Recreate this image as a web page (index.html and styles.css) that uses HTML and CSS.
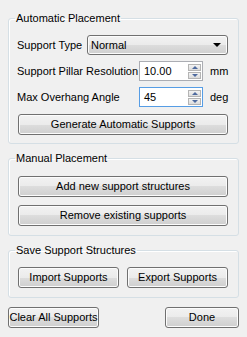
FILE: index.html
```html
<!DOCTYPE html>
<html>
<head>
<meta charset="utf-8">
<link rel="stylesheet" href="styles.css">
</head>
<body>
<div class="dialog">
  <fieldset class="group g1">
    <legend>Automatic Placement</legend>
    <div class="row">
      <span class="label type-label">Support Type</span>
      <div class="combo"><span class="combo-text">Normal</span><span class="combo-arrow"></span></div>
    </div>
    <div class="row">
      <span class="label spin-label">Support Pillar Resolution</span>
      <div class="spin"><span class="spin-text">10.00</span><span class="spin-btns"><span class="sb up"></span><span class="sb down"></span></span></div>
      <span class="unit">mm</span>
    </div>
    <div class="row">
      <span class="label spin-label">Max Overhang Angle</span>
      <div class="spin focus"><span class="spin-text">45</span><span class="spin-btns"><span class="sb up"></span><span class="sb down"></span></span></div>
      <span class="unit">deg</span>
    </div>
    <button class="btn wide gen">Generate Automatic Supports</button>
  </fieldset>
  <fieldset class="group g2">
    <legend>Manual Placement</legend>
    <button class="btn wide">Add new support structures</button>
    <button class="btn wide">Remove existing supports</button>
  </fieldset>
  <fieldset class="group g3">
    <legend>Save Support Structures</legend>
    <div class="pair">
      <button class="btn half">Import Supports</button>
      <button class="btn half">Export Supports</button>
    </div>
  </fieldset>
  <div class="footer">
    <button class="btn clear">Clear All Supports</button>
    <button class="btn done">Done</button>
  </div>
</div>
</body>
</html>
```
FILE: styles.css
```css
html, body {
  margin: 0;
  padding: 0;
  background: #f0f0f0;
}
body {
  width: 247px;
  height: 337px;
  overflow: hidden;
  font-family: "Liberation Sans", Arial, sans-serif;
  font-size: 11px;
  color: #000;
}
.dialog {
  padding: 12px 8px 0 8px;
  display: flex;
  flex-direction: column;
}
.group {
  margin: 0;
  border: 1px solid #d5dfe5;
  border-radius: 3px;
  padding: 10px 10px 8px 9px;
  display: flex;
  flex-direction: column;
  box-shadow: inset 1px 1px 0 #fff;
  min-width: 0;
}
.group legend {
  padding: 0 1px;
  margin-left: -3px;
  line-height: 13px;
  height: 13px;
}
.g2, .g3 {
  margin-top: 8px;
}
.g2 {
  padding-top: 11px;
  padding-bottom: 9px;
}
.g3 {
  padding-bottom: 9px;
}
.row {
  display: flex;
  align-items: center;
  height: 20px;
  margin-bottom: 6px;
}
.label {
  margin-left: -1px;
  white-space: nowrap;
}
.type-label {
  width: 70px;
  flex: none;
}
.spin-label {
  width: 122px;
  flex: none;
}
.combo {
  flex: 1;
  height: 20px;
  box-sizing: border-box;
  border: 1px solid #707070;
  border-radius: 3px;
  background: linear-gradient(#f2f2f2 0%, #ebebeb 50%, #dddddd 50%, #cfcfcf 100%);
  box-shadow: inset 0 0 0 1px #fcfcfc;
  display: flex;
  align-items: center;
  padding: 0 0 0 3px;
}
.combo-text {
  flex: 1;
}
.combo-arrow {
  width: 0;
  height: 0;
  border-left: 4px solid transparent;
  border-right: 4px solid transparent;
  border-top: 4px solid #000;
  margin-right: 6px;
}
.spin {
  width: 64px;
  height: 20px;
  box-sizing: border-box;
  border: 1px solid #abadb3;
  background: #fff;
  display: flex;
  align-items: center;
  padding: 0 1px 0 4px;
  flex: none;
}
.spin.focus {
  border-color: #569de5;
}
.spin-text {
  flex: 1;
}
.spin-btns {
  display: flex;
  flex-direction: column;
  gap: 1px;
}
.sb {
  width: 13px;
  height: 7px;
  box-sizing: border-box;
  border: 1px solid #b4b4b4;
  background: linear-gradient(#f3f3f3, #dcdcdc);
  display: flex;
  align-items: center;
  justify-content: center;
}
.sb::after {
  content: "";
  width: 0;
  height: 0;
  border-left: 3px solid transparent;
  border-right: 3px solid transparent;
}
.sb.up::after {
  border-bottom: 3px solid #4e6a9e;
}
.sb.down::after {
  border-top: 3px solid #4e6a9e;
}
.unit {
  margin-left: 7px;
}
.btn {
  font-family: inherit;
  font-size: 11px;
  color: #000;
  height: 21px;
  box-sizing: border-box;
  border: 1px solid #707070;
  border-radius: 3px;
  background: linear-gradient(#f2f2f2 0%, #ebebeb 50%, #dddddd 50%, #cfcfcf 100%);
  box-shadow: inset 0 0 0 1px #fcfcfc;
  padding: 0;
  margin: 0;
  line-height: 19px;
}
.wide {
  width: 100%;
}
.gen {
  margin-top: 1px;
}
.g2 .btn + .btn {
  margin-top: 8px;
}
.pair {
  display: flex;
  justify-content: space-between;
}
.half {
  width: 101px;
}
.footer {
  margin-top: 9px;
  display: flex;
  justify-content: space-between;
}
.clear {
  width: 91px;
}
.done {
  width: 74px;
}
```
